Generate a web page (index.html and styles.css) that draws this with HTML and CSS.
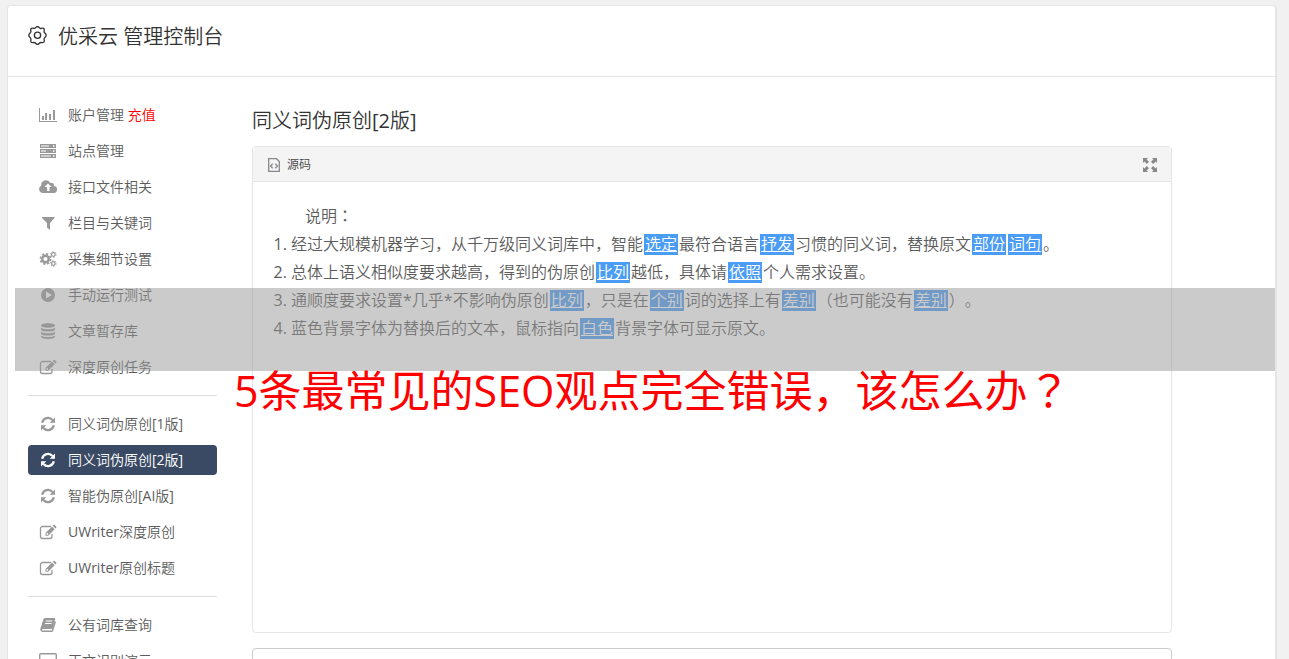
FILE: index.html
```html
<!DOCTYPE html>
<html lang="zh-CN">
<head>
<meta charset="utf-8">
<title>优采云 管理控制台</title>
<link rel="stylesheet" href="styles.css">
</head>
<body>
<svg class="sprite" aria-hidden="true">
  <symbol id="chart" viewBox="0 0 18 16"><path d="M0 1h1v13h17v1H0zM3 9h2v4H3zM6 6h2v7H6zM10 7h2v6h-2zM14 3h2v10h-2z"/></symbol>
  <symbol id="server" viewBox="0 0 18 16"><path fill-rule="evenodd" d="M1 1h16v4H1zM2 2.500h8v1H2zM14 2.300h1.500v1.500H14zM1 6h16v4H1zM2 7.500h5v1H2zM14 7.300h1.500v1.500H14zM1 11h16v4H1zM2 12.500h10v1H2zM14 12.300h1.500v1.500H14z"/></symbol>
  <symbol id="cloud" viewBox="0 0 18 16"><path fill-rule="evenodd" d="M4 14a4 4 0 0 1-1.800-7.500A4.800 4.800 0 0 1 11.300 4a2.500 2.500 0 0 1 3.500 3A3.500 3.500 0 0 1 14.200 14zM9 4.500 5.500 8H8v4h2.500V8H12.500z"/></symbol>
  <symbol id="filter" viewBox="0 0 18 16"><path d="M3 2h12.500v1L11 8v7l-3-2.500V8L3 3z"/></symbol>
  <symbol id="gears" viewBox="0 0 18 16"><circle cx="6.500" cy="8" r="3.300" fill="none" stroke="currentColor" stroke-width="2.400"/><circle cx="6.500" cy="8" r="5.100" fill="none" stroke="currentColor" stroke-width="1.700" stroke-dasharray="2.100 1.905"/><circle cx="14.300" cy="3.500" r="1.800" fill="none" stroke="currentColor" stroke-width="1.200"/><circle cx="14.300" cy="3.500" r="2.800" fill="none" stroke="currentColor" stroke-dasharray="1.300 1.632"/><circle cx="14.300" cy="12.500" r="1.800" fill="none" stroke="currentColor" stroke-width="1.200"/><circle cx="14.300" cy="12.500" r="2.800" fill="none" stroke="currentColor" stroke-dasharray="1.300 1.632"/></symbol>
  <symbol id="play" viewBox="0 0 18 16"><path fill-rule="evenodd" d="M9 1a7 7 0 1 0 0 14A7 7 0 0 0 9 1zM7 4.500v7L13 8z"/></symbol>
  <symbol id="database" viewBox="0 0 18 16"><path d="M2 2.500C2-.5 16-.5 16 2.500S2 5.500 2 2.500zM2 4.700c3 2 11 2 14 0v2c-1 2.500-13 2.500-14 0zM2 8.700c3 2 11 2 14 0v2c-1 2.500-13 2.500-14 0zM2 12.500c3 2 11 2 14 0v1.500c-1 2.500-13 2.500-14 0z"/></symbol>
  <symbol id="edit" viewBox="0 0 18 16"><path d="M12 2.500H3.500A2 2 0 0 0 1.500 4.500v8a2 2 0 0 0 2 2H11a2 2 0 0 0 2-2V10" fill="none" stroke="currentColor" stroke-width="1.300"/><path fill-rule="evenodd" d="M6.500 9 13 2.500l2.700 2.700-6.500 6.500H6.500zM7.500 9.500v1.200h1.300l.7-.7-1.300-1.300zM13.700 1.800l.8-.8q.6-.5 1.200 0l1.500 1.500q.5.600 0 1.200l-.8.800z"/></symbol>
  <symbol id="refresh" viewBox="0 0 18 16"><path d="M3.200 6.800A5.900 5.900 0 0 1 13.500 4M14.800 9.200A5.900 5.900 0 0 1 4.500 12" fill="none" stroke="currentColor" stroke-width="2.200"/><path d="M16 1.500v5.300h-5.300zM2 14.500V9.200h5.300z"/></symbol>
  <symbol id="book" viewBox="0 0 18 16"><path fill-rule="evenodd" d="M6 1h9.500q1 0 .7 1L13.500 11q-.3 1-1.300 1H3.500q-1 .5 0 1.500h9.200L15.800 4q1.400.2 1 1.500l-2.600 8.300Q13.900 15 12.600 15H3.500Q1 14.500 1.200 12.200L4.300 2.500Q4.800 1 6 1zM7 3.500l-.3 1h6.500l.3-1zM6.200 6l-.3 1h6.500l.3-1z"/></symbol>
  <symbol id="monitor" viewBox="0 0 18 16"><rect x=".7" y=".7" width="16.600" height="12" rx="1" fill="none" stroke="currentColor" stroke-width="1.400"/><path d="M6 14h6v1.500H6z"/></symbol>
  <symbol id="gear" viewBox="0 0 20 20"><path d="M8.300 1.500Q10-.5 11.700 1.500t3.100.7q2.500-.3 2.300 2.300-.7 2 .9 3.200 2.200 1.800 0 4.200-1.500 1.200-.9 3.200.3 2.600-2.300 2.400-2-.6-3.100.9-1.700 2-3.400 0-1.200-1.500-3.100-.9-2.500.2-2.300-2.400.6-2-.9-3.200-2.200-2.400 0-4.200 1.500-1.200.9-3.200Q2.700 1.900 5.200 2.200q1.900.8 3.100-.7z" fill="none" stroke="currentColor" stroke-width="1.400" stroke-linejoin="round"/><circle cx="10" cy="9.800" r="3.300" fill="none" stroke="currentColor" stroke-width="1.400"/></symbol>
  <symbol id="source" viewBox="0 0 12 14"><path d="M.7.700h7.800l2.800 2.800v9.800H.700zM4.700 5.800 2.500 8l2.200 2.200M7.300 5.800 9.500 8l-2.200 2.200" fill="none" stroke="currentColor" stroke-width="1.300"/></symbol>
  <symbol id="expand" viewBox="0 0 14 14"><path d="M0 0h5L3.600 1.400 6 3.800 3.800 6 1.400 3.600 0 5zM14 0v5l-1.400-1.400L10.200 6 8 3.800l2.400-2.400L9 0zM0 14V9l1.400 1.400L3.800 8 6 10.200l-2.400 2.400L5 14zM14 14H9l1.400-1.400L8 10.200 10.200 8l2.400 2.400L14 9z"/></symbol>
</svg>
<div class="page">
  <header class="page-header">
    <svg class="gear"><use href="#gear"/></svg>
    <h1 class="title">优采云 管理控制台</h1>
  </header>
  <div class="columns">
    <nav class="sidebar">
      <a class="item" href="#"><svg class="icon"><use href="#chart"/></svg><span>账户管理 <span class="recharge">充值</span></span></a>
      <a class="item" href="#"><svg class="icon"><use href="#server"/></svg>站点管理</a>
      <a class="item" href="#"><svg class="icon"><use href="#cloud"/></svg>接口文件相关</a>
      <a class="item" href="#"><svg class="icon"><use href="#filter"/></svg>栏目与关键词</a>
      <a class="item" href="#"><svg class="icon"><use href="#gears"/></svg>采集细节设置</a>
      <a class="item" href="#"><svg class="icon"><use href="#play"/></svg>手动运行测试</a>
      <a class="item" href="#"><svg class="icon"><use href="#database"/></svg>文章暂存库</a>
      <a class="item" href="#"><svg class="icon"><use href="#edit"/></svg>深度原创任务</a>
      <hr class="divider">
      <a class="item" href="#"><svg class="icon"><use href="#refresh"/></svg>同义词伪原创[1版]</a>
      <a class="item active" href="#"><svg class="icon"><use href="#refresh"/></svg>同义词伪原创[2版]</a>
      <a class="item" href="#"><svg class="icon"><use href="#refresh"/></svg>智能伪原创[AI版]</a>
      <a class="item" href="#"><svg class="icon"><use href="#edit"/></svg>UWriter深度原创</a>
      <a class="item" href="#"><svg class="icon"><use href="#edit"/></svg>UWriter原创标题</a>
      <hr class="divider">
      <a class="item" href="#"><svg class="icon"><use href="#book"/></svg>公有词库查询</a>
      <a class="item" href="#"><svg class="icon"><use href="#monitor"/></svg>正文识别演示</a>
    </nav>
    <main class="main">
      <h2 class="title">同义词伪原创[2版]</h2>
      <section class="editor">
        <div class="toolbar">
          <button class="tool" type="button"><svg class="source"><use href="#source"/></svg>源码</button>
          <button class="tool" type="button" aria-label="全屏"><svg class="expand"><use href="#expand"/></svg></button>
        </div>
        <div class="content">
          <p class="intro">说明<span class="mark" lang="zh-TW">：</span></p>
          <ol class="notes">
            <li>经过大规模机器学习，从千万级同义词库中，智能<u class="word">选定</u>最符合语言<u class="word">抒发</u>习惯的同义词，替换原文<u class="word">部份</u><u class="word">词句</u>。</li>
            <li>总体上语义相似度要求越高，得到的伪原创<u class="word">比列</u>越低，具体请<u class="word">依照</u>个人需求设置。</li>
            <li>通顺度要求设置*几乎*不影响伪原创<u class="word">比列</u>，只是在<u class="word">个别</u>词的选择上有<u class="word">差别</u>（也可能没有<u class="word">差别</u>）。</li>
            <li>蓝色背景字体为替换后的文本，鼠标指向<u class="word">白色</u>背景字体可显示原文。</li>
          </ol>
        </div>
      </section>
      <textarea class="result" aria-label="结果"></textarea>
    </main>
  </div>
</div>
<div class="band"></div>
<p class="caption">5条最常见的SEO观点完全错误，该怎么办<span class="mark" lang="zh-TW">？</span></p>
</body>
</html>
```
FILE: styles.css
```css
* {
  box-sizing: border-box;
}

body {
  position: relative;
  height: 100vh;
  margin: 0;
  padding: 5px 12px 0 7px;
  overflow: hidden;
  background: #f1f1f1;
  color: #5c5c5c;
  font: 400 14px/20px "Open Sans", "Noto Sans CJK SC DemiLight", "Noto Sans CJK SC", sans-serif;
  text-spacing-trim: space-all;
}

svg {
  display: block;
  flex: none;
  fill: currentColor;
}

.sprite {
  position: absolute;
  width: 0;
  height: 0;
}

.page {
  border: 1px solid #e5e5e5;
  border-right-width: 2px;
  border-radius: 4px;
  background: #fff;
}

.page-header {
  display: flex;
  align-items: center;
  gap: 11px;
  height: 71px;
  padding: 0 20px 8px;
  border-bottom: 1px solid #e5e5e5;
}

.gear {
  width: 19px;
  height: 19px;
  margin-bottom: 3px;
  color: #333;
}

.title {
  margin: 0;
  color: #333;
  font-size: 20px;
  font-weight: 400;
  line-height: 28px;
}

.columns {
  display: flex;
  gap: 35px;
  padding: 23px 103px 0 20px;
}

.sidebar {
  display: flex;
  flex: none;
  flex-direction: column;
  gap: 6px;
  width: 189px;
}

.item {
  display: flex;
  align-items: center;
  gap: 11px;
  height: 30px;
  padding: 0 11px;
  border-radius: 4px;
  color: #5c5c5c;
  text-decoration: none;
  white-space: nowrap;
}

.icon {
  width: 18px;
  height: 16px;
  color: #999;
}

.recharge {
  color: #f00;
}

.active {
  background: #3a4a64;
}

.active,
.active .icon {
  color: #fff;
}

.divider {
  width: 100%;
  margin: 7px 0;
  border: 0;
  border-top: 1px solid #ddd;
}

.main {
  flex: 1;
  min-width: 0;
  padding-top: 7px;
}

.editor {
  min-height: 487px;
  margin: 11px 0 15px;
  border: 1px solid #e5e5e5;
  border-radius: 4px;
}

.toolbar {
  display: flex;
  align-items: center;
  justify-content: space-between;
  height: 35px;
  padding: 2px 14px 0 15px;
  border-bottom: 1px solid #e5e5e5;
  background: #f4f4f4;
}

.tool {
  display: flex;
  align-items: center;
  gap: 7px;
  padding: 0;
  border: 0;
  background: none;
  color: #444;
  font: inherit;
  font-size: 12px;
}

.source {
  width: 12px;
  height: 14px;
  color: #888;
}

.expand {
  width: 14px;
  height: 14px;
  color: #888;
}

.content {
  padding: 20px;
  font-size: 16px;
  line-height: 28px;
}

.intro {
  margin: 0;
  text-indent: 2em;
}

.notes {
  margin: 0;
  padding-left: 18px;
}

.word {
  margin: 0 1px;
  padding: 0 1px;
  background: linear-gradient(#4a9cf4, #4a9cf4) center / 100% 21px no-repeat;
  color: #fff;
}

.result {
  display: block;
  width: 100%;
  height: 120px;
  border: 1px solid #ccc;
  border-radius: 4px;
  resize: none;
}

.band {
  position: absolute;
  top: 288px;
  right: 14px;
  left: 15px;
  height: 83px;
  background: rgba(151, 151, 151, 0.5);
}

.caption {
  position: absolute;
  top: 361px;
  left: 234px;
  margin: 0;
  color: #f00;
  font-family: "Open Sans", "Noto Sans CJK SC", sans-serif;
  font-size: 43px;
  font-weight: 400;
  line-height: 60px;
  white-space: nowrap;
}

.mark {
  font-family: "Noto Sans CJK TC", sans-serif;
  line-height: 1;
}
```
